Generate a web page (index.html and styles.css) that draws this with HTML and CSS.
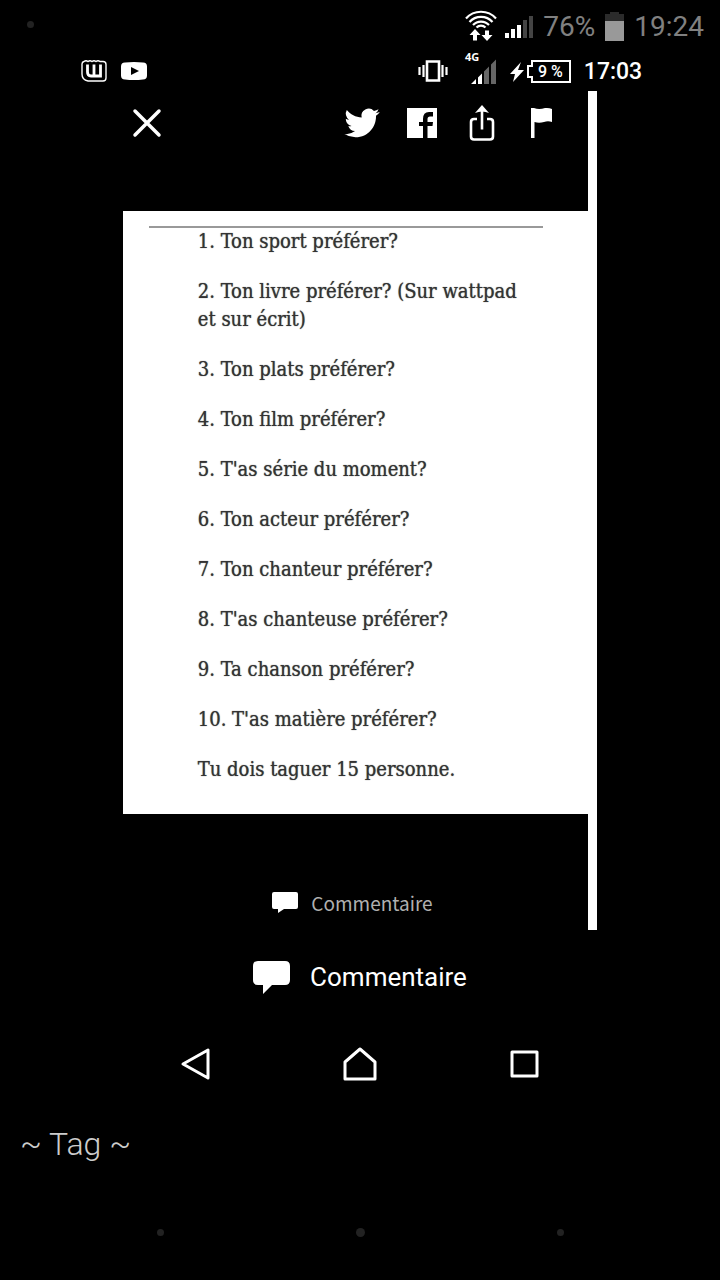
FILE: index.html
```
<!DOCTYPE html>
<html lang="fr">
<head>
    <meta charset="UTF-8">
    <meta name="viewport" content="width=device-width, initial-scale=1">
    <title>Tag</title>
    <link rel="stylesheet" href="styles.css">
</head>

<body>
    <!-- phone status bar -->
    <header class="sysbar">
        <span class="dot"></span>
        <div class="sysinfo">
            <svg class="wifi" width="32" height="32" viewBox="0 0 32 32" fill="none" stroke="#fff" stroke-width="2.2">
                <path d="M1 8.500A20 20 0 0 1 31 8.500M4.500 12A15.500 15.500 0 0 1 27.500 12M8 15A11 11 0 0 1 24 15M11.500 17.500A6.500 6.500 0 0 1 20.500 17.500"/>
                <path d="M10 19l5.500 6H12v5.500H8V25H4.500zM22 31l-5.500-6H20v-4.500h4V25h3.500z" fill="#fff" stroke="none"/>
            </svg>
            <svg class="signal" width="28" height="23" viewBox="0 0 28 23">
                <path d="M0 18h4v5H0zM6 14h4v9H6zM12 10h4v13h-4z" fill="#fff"/>
                <path d="M18 5h4v18h-4zM24 1h4v22h-4z" fill="#444"/>
            </svg>
            <span class="level">76%</span>
            <svg class="cell" width="19" height="29" viewBox="0 0 19 29">
                <path d="M5 0h9v2h5v7H0V2h5z" fill="#2b2b2b"/>
                <path d="M0 9h19v20H0z" fill="#999"/>
            </svg>
            <time class="clock">19:24</time>
        </div>
    </header>

    <main class="photo">
        <!-- status bar of the captured phone -->
        <div class="bar2">
            <div class="apps">
                <svg width="26" height="22" viewBox="0 0 26 22" fill="none" stroke="#fff">
                    <path d="M3 1.500Q5 0 7 1.500Q9 0 11 1.500Q13 0 15 1.500Q17 0 19 1.500H22Q25 1.500 25 4.500V18Q25 21 22 21H7Q1 20 1 14V4Q1 2 3 1.500z" stroke-width="1.400"/>
                    <path d="M6.500 4.500V12Q6.500 16 10 16H19.500V4.500M13 4.500V16" stroke-width="2.800"/>
                </svg>
                <svg width="26" height="18" viewBox="0 0 26 18">
                    <path d="M4 .5Q13-.5 22 .5Q26 .5 26 4.500V13.500Q26 17.500 22 17.500Q13 18.500 4 17.500Q0 17.500 0 13.500V4.500Q0 .5 4 .5z" fill="#fff"/>
                    <path d="M10 5l8 4-8 4z" fill="#000"/>
                </svg>
            </div>
            <div class="state">
                <svg class="vibrate" width="30" height="22" viewBox="0 0 30 22" fill="none" stroke="#fff">
                    <path d="M9 1.500h12v19H9z" stroke-width="2.600"/>
                    <path d="M5.500 5v12M24.500 5v12M1.500 7v8M28.500 7v8" stroke-width="2.200"/>
                </svg>
                <div class="net">
                    <span class="gen">4G</span>
                    <svg width="26" height="25" viewBox="0 0 26 25">
                        <path d="M0 25l5-5v5zM7 18.500l4-4V25H7z" fill="#fff"/>
                        <path d="M13 12.500l5-5V25h-5zM20 5.500l5-5V25h-5z" fill="#666"/>
                    </svg>
                </div>
                <svg class="bolt" width="14" height="22" viewBox="0 0 14 22">
                    <path d="M11 1L0 13h5L3 21 14 9H8z" fill="#fff"/>
                </svg>
                <span class="batt">
                    <svg width="6" height="23" viewBox="0 0 6 23" fill="none" stroke="#fff" stroke-width="2"><path d="M6 1H5v5H1v11h4v5h1"/></svg>
                    <span class="charge">9 %</span>
                </span>
                <time class="clock2">17:03</time>
            </div>
        </div>

        <!-- Wattpad screen -->
        <section class="shot">
            <div class="tools">
                <button class="btn" aria-label="Fermer">
                    <svg viewBox="0 0 32 32"><path d="M4 4l24 24M28 4L4 28" stroke="#fff" stroke-width="3.500" stroke-linecap="round"/></svg>
                </button>
                <div class="share">
                    <button class="btn" aria-label="Twitter">
                        <svg class="bird" viewBox="0 0 24 24"><path d="M23.950 4.570a10 10 0 0 1-2.820.770 4.960 4.960 0 0 0 2.160-2.720c-.950.550-2 .950-3.130 1.180a4.920 4.920 0 0 0-8.380 4.480C7.690 8.090 4.070 6.130 1.640 3.160a4.930 4.930 0 0 0 1.520 6.570 4.900 4.900 0 0 1-2.230-.610v.060a4.920 4.920 0 0 0 3.950 4.830 5 5 0 0 1-2.210.080 4.940 4.940 0 0 0 4.600 3.420A9.870 9.870 0 0 1 0 19.540a13.990 13.990 0 0 0 7.550 2.210c9.050 0 14-7.500 14-13.980 0-.210 0-.420-.020-.630a10 10 0 0 0 2.460-2.550z" fill="#fff"/></svg>
                    </button>
                    <button class="btn" aria-label="Facebook">
                        <svg viewBox="0 0 32 32"><path d="M1 1h30v30H1z" fill="#fff"/><path d="M17 31V19h-4v-4h4v-3Q17 5 23 5h4v4.500h-3Q21.500 9.500 21.500 12v3H27l-.5 4h-5v12z" fill="#000"/></svg>
                    </button>
                    <button class="btn" aria-label="Partager">
                        <svg viewBox="0 0 32 32" fill="none" stroke="#fff" stroke-width="2.600"><path d="M11 12H8q-3 0-3 3v14.500q0 3 3 3h16q3 0 3-3V15q0-3-3-3h-3M16 22.500V1"/><path d="M16-2l7 8q-7-3-14 0z" fill="#fff" stroke="none"/></svg>
                    </button>
                    <button class="btn" aria-label="Signaler">
                        <svg viewBox="0 0 32 32"><path d="M5 1h3q5 2 11 0 4-.5 7 1v13q-4-1.500-8 0-5 1.500-9.500 0v16H5z" fill="#fff"/></svg>
                    </button>
                </div>
            </div>

            <article class="page">
                <hr class="line">
                <p>1. Ton sport préférer?</p>
                <p>2. Ton livre préférer? (Sur wattpad et sur écrit)</p>
                <p>3. Ton plats préférer?</p>
                <p>4. Ton film préférer?</p>
                <p>5. T'as série du moment?</p>
                <p>6. Ton acteur préférer?</p>
                <p>7. Ton chanteur préférer?</p>
                <p>8. T'as chanteuse préférer?</p>
                <p>9. Ta chanson préférer?</p>
                <p>10. T'as matière préférer?</p>
                <p>Tu dois taguer 15 personne.</p>
            </article>

            <button class="comment small">
                <svg width="26" height="21" viewBox="0 0 26 21"><path d="M2 0h22q2 0 2 2v13q0 2-2 2H12l-6 4v-4H2q-2 0-2-2V2q0-2 2-2z" fill="#fff"/></svg>
                Commentaire
            </button>
        </section>

        <button class="comment big">
            <svg width="37" height="33" viewBox="0 0 37 33"><path d="M5 0h27q5 0 5 5v14q0 5-5 5H19L10 33v-9H5q-5 0-5-5V5q0-5 5-5z" fill="#fff"/></svg>
            Commentaire
        </button>

        <nav class="keys">
            <button class="key" aria-label="Retour">
                <svg viewBox="0 0 36 36"><path d="M5 18L30 4v28z"/></svg>
            </button>
            <button class="key" aria-label="Accueil">
                <svg viewBox="0 0 36 36"><path d="M18 3l15 13v17H3V16z"/></svg>
            </button>
            <button class="key" aria-label="Applications">
                <svg viewBox="0 0 36 36"><path d="M6 6h25v24H6z"/></svg>
            </button>
        </nav>
    </main>

    <p class="caption">~ Tag ~</p>

    <!-- dimmed navigation keys -->
    <footer class="dots">
        <span class="dot"></span>
        <span class="dot mid"></span>
        <span class="dot"></span>
    </footer>
</body>
</html>
```

FILE: styles.css
```
html,
body,
p,
hr {
    margin: 0;
    padding: 0;
}

body {
    background-color: #000;
    color: #fff;
    font-family: Roboto, sans-serif;
}

svg {
    display: block;
}

button {
    padding: 0;
    border: 0;
    background: none;
    color: inherit;
    font: inherit;
    cursor: pointer;
}

/* status bar */
.sysbar {
    display: flex;
    justify-content: space-between;
    align-items: center;
    height: 52px;
    padding: 0 16px 0 27px;
}

.sysinfo {
    display: flex;
    align-items: center;
    gap: 10px;
    font-size: 28px;
    color: #808080;
}

.sysbar .dot {
    margin-bottom: 4px;
}

.wifi {
    margin-right: -2px;
}

.dot {
    width: 7px;
    height: 7px;
    border-radius: 50%;
    background: #222;
}

/* capture */
.photo {
    width: 82%;
    margin: 0 auto;
}

.bar2 {
    display: flex;
    justify-content: space-between;
    align-items: center;
    height: 39px;
    padding: 0 13px 0 16px;
}

.apps,
.state {
    display: flex;
    align-items: center;
    gap: 14px;
}

.apps {
    padding-bottom: 2px;
}

.state {
    gap: 13px;
}

.vibrate {
    margin: 0 4px 2px 0;
}

.net {
    display: flex;
    flex-direction: column;
    align-items: flex-end;
    width: 32px;
    margin-bottom: 8px;
}

.gen {
    align-self: flex-start;
    height: 7px;
    font: bold 11px/10px "Noto Sans", sans-serif;
}

.bolt {
    margin-right: -10px;
}

.batt {
    display: flex;
}

.charge {
    padding: 0 6px 0 5px;
    border: 2px solid #fff;
    border-left: 0;
    font-size: 16px;
    font-weight: 500;
    line-height: 19px;
}

.clock2 {
    font-size: 23px;
    font-weight: 500;
}

.shot {
    margin: 0 58px;
    border-right: 9px solid #fff;
}

.tools {
    display: flex;
    justify-content: space-between;
    align-items: flex-start;
    height: 104px;
    padding: 16px 30px 0 8px;
}

.share {
    display: flex;
    gap: 28px;
}

.btn {
    width: 32px;
    height: 32px;
}

.btn svg {
    width: 100%;
    height: 100%;
    overflow: visible;
}

.btn .bird {
    transform: scale(1.1);
}

/* text of the chapter */
.page {
    padding: 15px 55px 31px 75px;
    background: #fff;
    color: #333;
    font-family: "DejaVu Serif Condensed", "DejaVu Serif", serif;
    font-size: 20px;
    line-height: 28px;
    text-shadow: 0 0 1px #555;
}

.page p + p {
    margin-top: 22px;
}

.page .line {
    height: 2px;
    margin: 0 -10px -1px -49px;
    border: 0;
    background: #999;
}

.comment {
    display: flex;
    justify-content: center;
    align-items: center;
    width: 100%;
}

.small {
    gap: 13px;
    height: 116px;
    padding: 60px 6px 0 0;
    font-family: "Noto Sans CJK JP", "Noto Sans", sans-serif;
    font-size: 19px;
    color: #b0b0b0;
}

.big {
    gap: 20px;
    height: 94px;
    font-size: 26px;
}

.keys {
    display: flex;
    justify-content: center;
    align-items: center;
    gap: 128px;
    height: 80px;
}

.key {
    width: 36px;
    height: 36px;
}

.key svg {
    fill: none;
    stroke: #fff;
    stroke-width: 3;
    stroke-linejoin: round;
}

.caption {
    padding: 20px;
    font-size: 32px;
    font-weight: 300;
    line-height: 40px;
    color: #ccc;
}

.dots {
    display: grid;
    grid-template-columns: repeat(3, 1fr);
    place-items: center;
    height: 96px;
    padding: 0 60px;
}

.mid {
    width: 9px;
    height: 9px;
}
```
